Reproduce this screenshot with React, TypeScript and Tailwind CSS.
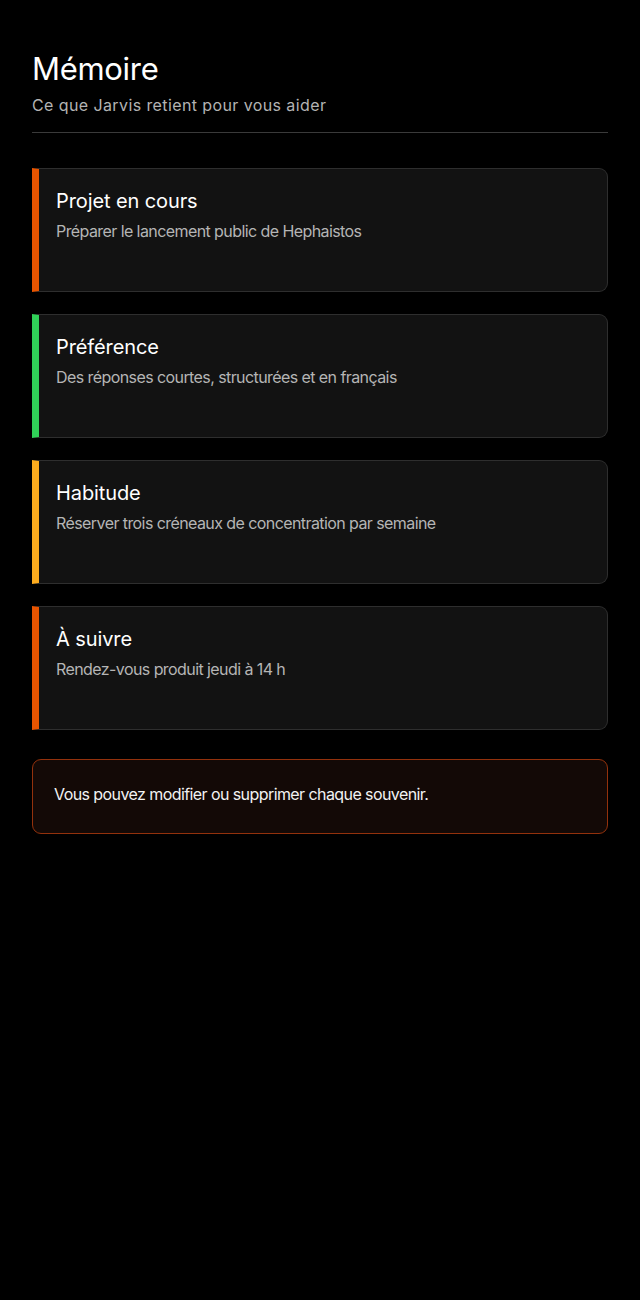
import React from "react";

const items = [
  { title: "Projet en cours", text: "Préparer le lancement public de Hephaistos", color: "border-l-[#e85400]" },
  { title: "Préférence", text: "Des réponses courtes, structurées et en français", color: "border-l-[#30d158]" },
  { title: "Habitude", text: "Réserver trois créneaux de concentration par semaine", color: "border-l-[#fdac1e]" },
  { title: "À suivre", text: "Rendez-vous produit jeudi à 14 h", color: "border-l-[#e85400]" },
];

export default function App() {
  return (
    <div className="min-h-[1300px] bg-black text-white px-8 pt-[49px]" style={{ fontFamily: "Inter, 'Noto Sans', sans-serif" }}>
      <h1 className="text-[31px] leading-[40px] tracking-[-0.3px]">Mémoire</h1>
      <p className="text-[16px] leading-[20px] text-[#b3b3b3] mt-[6px] tracking-[0.4px]">Ce que Jarvis retient pour vous aider</p>
      <div className="h-px bg-[#3a3a3a] mt-[17px]" />
      <div className="mt-[35px] flex flex-col gap-[22px]">
        {items.map((it) => (
          <div
            key={it.title}
            className={`h-[124px] bg-[#121212] border border-[#2e2e2e] border-l-[7px] ${it.color} rounded-r-[9px] pl-[17px] pt-[18px]`}
          >
            <div className="text-[20px] leading-[28px] tracking-[-0.1px]">{it.title}</div>
            <div className="text-[16px] leading-[22px] text-[#b5b5b5] mt-[5px] tracking-[-0.58px]">{it.text}</div>
          </div>
        ))}
      </div>
      <div className="mt-[29px] h-[75px] bg-[#130906] border border-[#93310c] rounded-[9px] flex items-center pl-[21px] pb-[6px]">
        <span className="text-[16px] tracking-[-0.58px] text-[#f2f2f2]">Vous pouvez modifier ou supprimer chaque souvenir.</span>
      </div>
    </div>
  );
}
